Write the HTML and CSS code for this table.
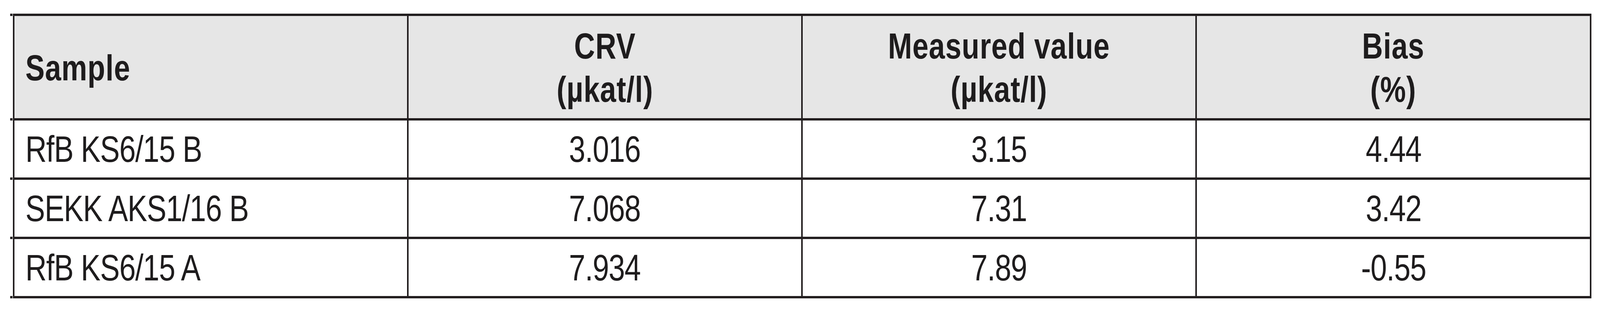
FILE: index.html
```html
<!DOCTYPE html>
<html lang="en">
<head>
<meta charset="utf-8">
<title>Bias table</title>
<link rel="stylesheet" href="styles.css">
</head>
<body>
<table class="data-table">
  <colgroup>
    <col class="col"><col class="col"><col class="col"><col class="col">
  </colgroup>
  <thead>
    <tr class="head-row">
      <th class="cell head-cell first"><span class="txt">Sample</span></th>
      <th class="cell head-cell"><span class="txt">CRV<br>(µkat/l)</span></th>
      <th class="cell head-cell"><span class="txt">Measured value<br>(µkat/l)</span></th>
      <th class="cell head-cell"><span class="txt">Bias<br>(%)</span></th>
    </tr>
  </thead>
  <tbody>
    <tr class="body-row">
      <td class="cell first"><span class="txt">RfB KS6/15 B</span></td>
      <td class="cell"><span class="txt">3.016</span></td>
      <td class="cell"><span class="txt">3.15</span></td>
      <td class="cell"><span class="txt">4.44</span></td>
    </tr>
    <tr class="body-row">
      <td class="cell first"><span class="txt">SEKK AKS1/16 B</span></td>
      <td class="cell"><span class="txt">7.068</span></td>
      <td class="cell"><span class="txt">7.31</span></td>
      <td class="cell"><span class="txt">3.42</span></td>
    </tr>
    <tr class="body-row">
      <td class="cell first"><span class="txt">RfB KS6/15 A</span></td>
      <td class="cell"><span class="txt">7.934</span></td>
      <td class="cell"><span class="txt">7.89</span></td>
      <td class="cell"><span class="txt">-0.55</span></td>
    </tr>
  </tbody>
</table>
</body>
</html>
```

FILE: styles.css
```css
:root {
  /* one reference pixel, horizontally (reference is 5152 wide) */
  --u: calc(100vw / 5152);
}

html, body {
  margin: 0;
  padding: 0;
  background: #ffffff;
}

body {
  font-family: "Liberation Sans", Arial, sans-serif;
  color: #1e1c1d;
}

.data-table {
  margin: 35px 0 0 calc(41 * var(--u));
  width: calc(5083 * var(--u));
  table-layout: fixed;
  border-collapse: separate;
  border-spacing: 0;
  border-top: 6px solid #231f20;
  border-left: calc(6 * var(--u)) solid #231f20;
}

.col {
  width: 25%;
}

.cell {
  box-sizing: border-box;
  border-right: calc(6 * var(--u)) solid #231f20;
  border-bottom: 6px solid #231f20;
  padding: 0;
  text-align: center;
  vertical-align: middle;
  font-size: 95px;
  line-height: 106px;
  letter-spacing: -1.5px;
  font-weight: 400;
  white-space: nowrap;
}

.head-row .cell {
  height: 268px;
}

.body-row .cell {
  height: 152px;
}

.head-cell {
  background: #e6e6e6;
  font-weight: 700;
  font-size: 93px;
  line-height: 111px;
  letter-spacing: 1.2px;
  padding-top: 4px;
}

/* glyphs keep the reference's height but its narrower horizontal scale */
.txt {
  display: inline-block;
  transform: scaleX(0.795);
  transform-origin: 50% 50%;
}

.cell.first {
  position: relative;
  text-align: left;
  padding-left: calc(36 * var(--u));
}

.cell.first .txt {
  transform-origin: 0 50%;
}

/* rule ends that poke out left of the table frame */
.cell.first::after,
.head-cell.first::before {
  content: "";
  position: absolute;
  left: calc(-13 * var(--u));
  width: calc(7 * var(--u));
  height: 6px;
  background: #231f20;
}

.cell.first::after {
  bottom: -6px;
}

.head-cell.first::before {
  top: -6px;
}
```
